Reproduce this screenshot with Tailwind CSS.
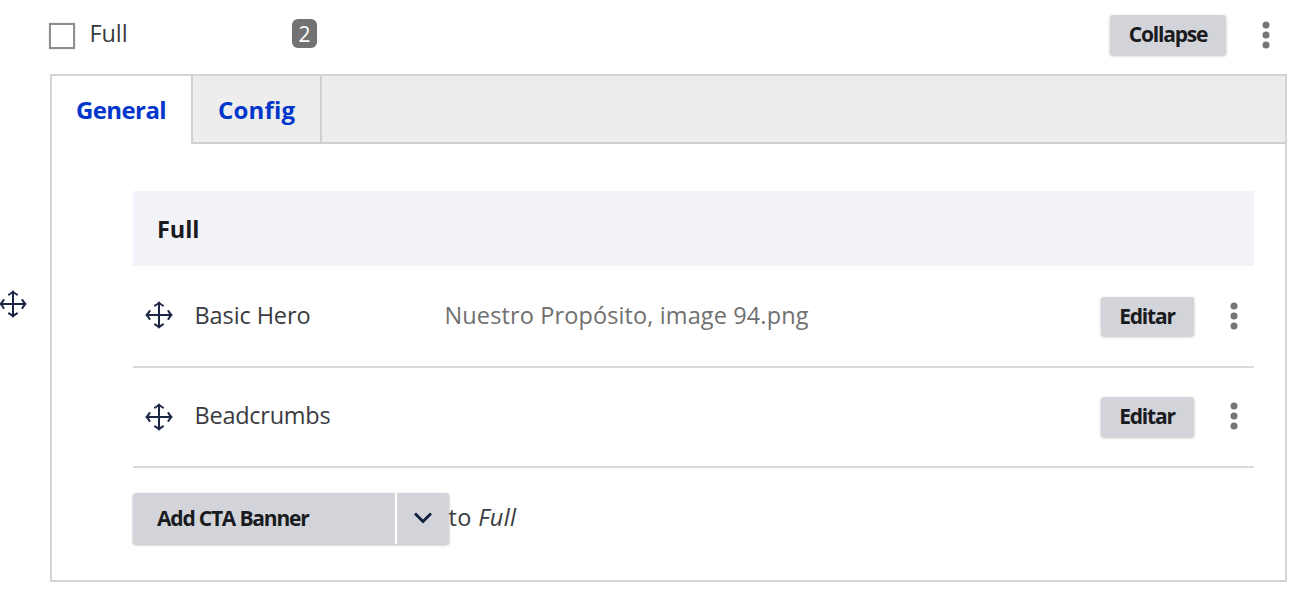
<!DOCTYPE html>
<html lang="es">
<head>
<meta charset="utf-8">
<title>Full</title>
<script src="https://cdn.jsdelivr.net/npm/@tailwindcss/browser@4"></script>
</head>
<body class="bg-white">
<svg class="hidden">
  <symbol id="move" viewBox="0 0 28 28">
    <path d="M14 1.5V26.5M1.5 14H26.5M10 4.6Q12 3.6 14 1.6Q16 3.6 18 4.6M10 23.4Q12 24.4 14 26.4Q16 24.4 18 23.4M4.6 10Q3.6 12 1.6 14Q3.6 16 4.6 18M23.4 10Q24.4 12 26.4 14Q24.4 16 23.4 18" fill="none" stroke="#1b2745" stroke-width="2" stroke-linecap="round"/>
  </symbol>
  <symbol id="dots" viewBox="0 0 8 28">
    <g fill="#757575"><circle cx="4" cy="4" r="3.5"/><circle cx="4" cy="14" r="3.5"/><circle cx="4" cy="24" r="3.5"/></g>
  </symbol>
</svg>
<div class="flex h-[607px] w-[1312px] overflow-hidden font-['Open_Sans','Noto_Sans',sans-serif] text-[23.5px] text-[#3a3b40]">
  <div class="flex w-[50px] shrink-0 items-center"><svg class="-ml-[1px] size-7"><use href="#move"/></svg></div>
  <main class="w-[1237px]">
    <header class="flex h-[73.5px] items-start">
      <div class="mt-[23px] -ml-[1px] size-[26px] border-2 border-[#8e8e8e] shadow-[0_0_1px_#aaa]"></div>
      <span class="mt-[13px] ml-[14.5px] w-[202.5px] leading-10"><span class="tracking-[-0.1px]">Full</span></span>
      <span class="mt-[19px] flex h-[29px] w-[25px] items-center justify-center rounded-[6px] bg-[#727272] pt-[2px] text-[21px] leading-none text-white">2</span>
      <button class="mt-[15px] ml-auto flex h-[39.5px] w-[116px] items-center justify-center rounded-[3px] bg-[#d3d4d9] text-[21px] font-bold text-[#1a1b1f] shadow-[0_1px_3px_rgba(0,0,0,0.25)]"><span class="tracking-[-1.2px]">Collapse</span></button>
      <svg class="mt-[20.5px] mr-[17px] ml-[36px] h-7 w-2"><use href="#dots"/></svg>
    </header>
    <section class="h-[508px] border-2 border-[#d4d4d4]">
      <nav class="flex h-[68px] text-[24px] font-bold text-[#0036cc]">
        <div class="w-[138.5px] pl-6 leading-[67px]"><span class="tracking-[-0.6px]">General</span></div>
        <div class="w-[131px] rounded-bl-[2px] border-x-2 border-b-2 border-[#d0d0d0] bg-[#ededed] pl-[25.5px] leading-[67px]"><span class="tracking-[0.2px]">Config</span></div>
        <div class="flex-1 border-b-2 border-[#d0d0d0] bg-[#ededed]"></div>
      </nav>
      <div class="mt-[47.5px] mr-[31px] ml-[81px]">
        <div class="h-[75px] bg-[#f2f3f9] pl-6 leading-[77px] font-bold text-[#1a1b1f]"><span class="tracking-[-0.1px]">Full</span></div>
        <div class="flex h-[102px] items-center border-b-2 border-[#d9dae0]">
          <svg class="mb-[2px] ml-[11.5px] size-7 shrink-0"><use href="#move"/></svg>
          <span class="ml-[22px] w-[250px]"><span class="tracking-[-0.1px]">Basic Hero</span></span>
          <span class="text-[#707070]"><span class="tracking-[0.12px]">Nuestro Propósito, image 94.png</span></span>
          <button class="mt-[1px] ml-auto flex h-[39.5px] w-[93px] items-center justify-center rounded-[3px] bg-[#d3d4d9] text-[21px] font-bold text-[#1a1b1f] shadow-[0_1px_3px_rgba(0,0,0,0.25)]"><span class="tracking-[-1.2px]">Editar</span></button>
          <svg class="mr-4 ml-[36.5px] h-7 w-2"><use href="#dots"/></svg>
        </div>
        <div class="flex h-[100px] items-center border-b-2 border-[#d9dae0] pb-[1px]">
          <svg class="ml-[11.5px] size-7 shrink-0"><use href="#move"/></svg>
          <span class="mb-[2px] ml-[22px] w-[250px]"><span class="tracking-[-0.25px]">Beadcrumbs</span></span>
          <button class="mt-[1px] ml-auto flex h-[39.5px] w-[93px] items-center justify-center rounded-[3px] bg-[#d3d4d9] text-[21px] font-bold text-[#1a1b1f] shadow-[0_1px_3px_rgba(0,0,0,0.25)]"><span class="tracking-[-1.2px]">Editar</span></button>
          <svg class="mr-4 mb-[1px] ml-[36.5px] h-7 w-2"><use href="#dots"/></svg>
        </div>
        <div class="mt-[25px] flex items-center">
          <div class="flex h-[51px] w-[315.5px] rounded-[3px] bg-[#d3d4d9] text-[21px] font-bold text-[#1a1b1f] shadow-[0_1px_3px_rgba(0,0,0,0.3)]">
            <button class="w-[264px] border-r-2 border-white pl-6 text-left"><span class="tracking-[-1.2px]">Add CTA Banner</span></button>
            <button class="flex flex-1 items-center justify-center pb-[2px]"><svg class="h-3 w-5" viewBox="0 0 20 12"><path d="M2 1.5L10 9.5L18 1.5" fill="none" stroke="#0e1c3d" stroke-width="2.8"/></svg></button>
          </div>
          <span class="-mt-[2px]"><span class="tracking-[0.35px]">to <em>Full</em></span></span>
        </div>
      </div>
    </section>
  </main>
</div>
</body>
</html>
